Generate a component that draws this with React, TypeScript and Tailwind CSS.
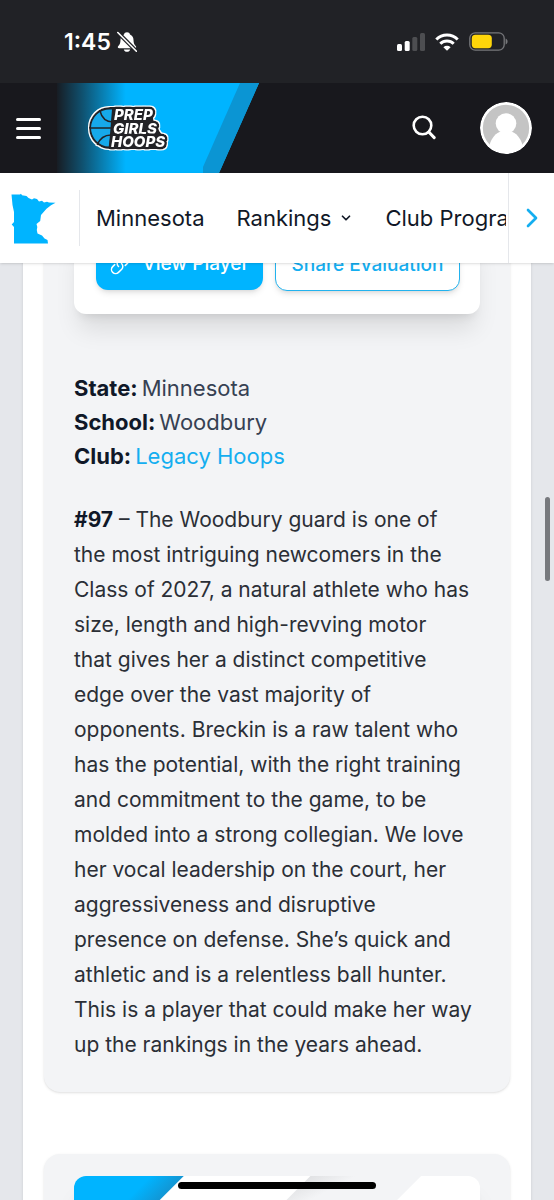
import { ChevronDown, ChevronRight } from "lucide-react";

const facts = [
  { label: "State:", value: "Minnesota" },
  { label: "School:", value: "Woodbury" },
  { label: "Club:", value: "Legacy Hoops", href: "#club" },
];

function StatusBar() {
  return (
    <div className="flex h-[83px] shrink-0 items-center justify-between bg-[#212226] pl-16 pr-[46px] text-white">
      <div className="flex items-center gap-1.5">
        <span className="text-[23px] font-semibold leading-7">1:45</span>
        <svg viewBox="0 0 20 22" className="h-[22px] w-5" fill="currentColor" aria-hidden="true">
          <path d="M10 1.2c-1.6 0-2.7.9-3 2.2-2.4 1-3.5 3.100-3.500 5.600 0 3.200-.9 4.500-2.200 6-.9 1.100-.6 2.300.9 2.300h15.600c1.500 0 1.800-1.200.9-2.300-1.300-1.500-2.200-2.800-2.200-6 0-2.500-1.100-4.600-3.500-5.600-.3-1.300-1.400-2.200-3-2.200Z" />
          <path d="M6.800 18.400h6.400c-.4 1.500-1.600 2.400-3.200 2.400s-2.800-.9-3.200-2.400Z" />
          <path d="m.8 1.500 18.600 18.700" stroke="#212226" strokeWidth="4" />
          <path d="m.8 1.500 18.600 18.700" stroke="currentColor" strokeWidth="1.600" strokeLinecap="round" />
        </svg>
      </div>
      <div className="flex items-center gap-[10px]">
        <svg viewBox="0 0 28 18" className="h-[18px] w-7" fill="currentColor" aria-hidden="true">
          <rect x="0" y="11" width="5" height="7" rx="1.500" />
          <rect x="7.700" y="8" width="5" height="10" rx="1.500" />
          <rect x="15.300" y="4" width="5" height="14" rx="1.500" opacity=".2" />
          <rect x="23" y="0" width="5" height="18" rx="1.500" opacity=".2" />
        </svg>
        <svg viewBox="0 0 24 18" className="h-[18px] w-6" fill="none" stroke="currentColor" strokeWidth="3" aria-hidden="true">
          <path d="M1.300 6.500a15.200 15.200 0 0 1 21.400 0" />
          <path d="M5.300 10.800a9.500 9.500 0 0 1 13.400 0" />
          <path d="M12 17.800 8.400 14.200a5.100 5.100 0 0 1 7.200 0Z" fill="currentColor" stroke="none" />
        </svg>
        <svg viewBox="0 0 39 19" className="h-[19px] w-[39px]" aria-hidden="true">
          <rect x=".8" y=".8" width="34.400" height="17.400" rx="5.500" fill="none" stroke="#77787b" strokeWidth="1.300" />
          <rect x="2.800" y="2.800" width="20" height="13.400" rx="3.600" fill="#ffd60a" />
          <path d="M36.600 6.500c2.600.9 2.600 5.100 0 6Z" fill="#77787b" />
        </svg>
      </div>
    </div>
  );
}

const logoLines = [
  { text: "PREP", x: 57, y: 36.5 },
  { text: "GIRLS", x: 56, y: 50.5 },
  { text: "HOOPS", x: 54, y: 64 },
];

function Logo() {
  return (
    <svg viewBox="0 0 202 90" className="h-[90px] w-[202px]" role="img" aria-label="Prep Girls Hoops">
      <defs>
        <linearGradient id="brand-fade">
          <stop offset="0" stopColor="#00b4ff" stopOpacity=".03" />
          <stop offset=".12" stopColor="#00b4ff" stopOpacity=".35" />
          <stop offset=".24" stopColor="#00b4ff" stopOpacity=".7" />
          <stop offset=".34" stopColor="#00b4ff" />
        </linearGradient>
        <filter id="badge-outline" x="-10%" y="-10%" width="120%" height="120%">
          <feMorphology in="SourceAlpha" operator="dilate" radius="1" />
          <feComponentTransfer result="edge">
            <feFuncR type="linear" slope="0" intercept="1" />
            <feFuncG type="linear" slope="0" intercept="1" />
            <feFuncB type="linear" slope="0" intercept="1" />
          </feComponentTransfer>
          <feMerge>
            <feMergeNode in="edge" />
            <feMergeNode in="SourceGraphic" />
          </feMerge>
        </filter>
      </defs>
      <path d="M0 0h202l-40 90H0Z" fill="url(#brand-fade)" />
      <path d="M183 0h19l-40 90h-16v-6Z" fill="#0b95d3" />
      <g filter="url(#badge-outline)">
        <path d="M94 24H53a21 21 0 0 0 0 42h50l2-14-8-12Z" fill="#222327" />
        <path d="M55 26.500h-2a18.500 18.500 0 0 0-1 37Z" fill="#19a9ea" />
        <path
          d="M34 45h21M43 28c2 8 6 11 13 11M40 62c3-7 7-10 14-10"
          fill="none"
          stroke="#222327"
          strokeWidth="1.500"
        />
        <g
          fontFamily="Inter, sans-serif"
          fontSize="15"
          fontWeight="800"
          fontStyle="italic"
          fill="#fff"
          stroke="#222327"
          strokeWidth="5"
          strokeLinejoin="round"
          paintOrder="stroke"
        >
          {logoLines.map((line) => (
            <text key={line.text} x={line.x} y={line.y}>
              {line.text}
            </text>
          ))}
        </g>
      </g>
    </svg>
  );
}

function SiteHeader() {
  return (
    <header className="flex h-[90px] shrink-0 items-center bg-[#18181d] pr-[22px]">
      <button type="button" aria-label="Open menu" className="flex w-[57px] flex-col gap-1.5 pl-4">
        <span className="h-[3px] w-[25px] rounded-full bg-white" />
        <span className="h-[3px] w-[25px] rounded-full bg-white" />
        <span className="h-[3px] w-[25px] rounded-full bg-white" />
      </button>
      <a href="#home">
        <Logo />
      </a>
      <button type="button" aria-label="Search" className="ml-auto mr-11 text-white">
        <svg viewBox="0 0 24 26" className="h-[26px] w-6" fill="none" stroke="currentColor" strokeWidth="2.600" strokeLinecap="round" aria-hidden="true">
          <circle cx="10.500" cy="10.500" r="8.800" />
          <path d="m16.800 17 5.400 5.600" strokeWidth="3" />
        </svg>
      </button>
      <button type="button" aria-label="Account" className="size-[52px] overflow-hidden rounded-full">
        <svg viewBox="0 0 52 52" aria-hidden="true">
          <circle cx="26" cy="26" r="26" fill="#fff" />
          <circle cx="26" cy="26" r="23.200" fill="#c4c4c4" />
          <circle cx="26" cy="21.500" r="10.300" fill="#fff" />
          <path d="M9.500 43c2-7 6.500-12.500 12-13.500h9c5.500 1 10 6.500 12 13.500-4 5-10 8-16.500 8S13.500 48 9.500 43Z" fill="#fff" />
        </svg>
      </button>
    </header>
  );
}

function StateNav() {
  return (
    <nav className="relative z-10 flex h-[90px] shrink-0 items-center bg-white text-[22px] text-[#111827] shadow-sm">
      <a href="#state" aria-label="Minnesota home" className="shrink-0 pl-[11px]">
        <svg viewBox="0 0 45 51" className="h-[51px] w-[45px]" fill="#00b4ff" aria-hidden="true">
          <path d="M.5 1.500H9L10 .8l1 1.500 4.500.8 2 2 3.500 1.400L23 5.300l3 .7 2 2.500 3-.7 2 1.700 3-.8 2 .8 6.500.2-4.500 2.500-4.500 3.500L30 22l-.8 6-3.700 3 .8 3-.5 3 .7 3.500 4.500 2 2.500 3 3 1.500.5 3.500H3V34l-2.300-2.500L3 29V19L1.500 12Z" />
        </svg>
      </a>
      <div className="ml-[23px] h-14 w-px shrink-0 bg-gray-200" />
      <div className="mr-0.5 flex min-w-0 flex-1 items-center gap-8 overflow-hidden whitespace-nowrap pl-4">
        <a href="#minnesota">Minnesota</a>
        <button type="button" className="flex items-center gap-2">
          Rankings
          <ChevronDown className="size-[14px]" strokeWidth={3} />
        </button>
        <a href="#club-programs">Club Programs</a>
      </div>
      <button
        type="button"
        aria-label="Scroll menu right"
        className="flex h-full w-[46px] shrink-0 items-center justify-center border-l border-gray-200 text-[#14aef0]"
      >
        <ChevronRight className="size-8" strokeWidth={2} />
      </button>
    </nav>
  );
}

function EvaluationCard() {
  return (
    <section className="rounded-b-2xl bg-gray-100 px-[30px] pb-[30px] shadow">
      <div className="grid grid-cols-[167fr_185fr] gap-3 rounded-b-xl bg-white pb-[23px] pl-[22px] pr-5 pt-2 text-[19px] font-medium shadow-xl">
        <a
          href="#player"
          className="flex h-[51px] items-center justify-center gap-3 whitespace-nowrap rounded-xl bg-[#00b4ff] text-white shadow-md"
        >
          <svg viewBox="0 0 20 20" className="size-5" fill="none" stroke="currentColor" strokeWidth="1.500" strokeLinecap="round" aria-hidden="true">
            <path d="M8.500 11.500a4 4 0 0 1-.2-5.700l3.200-3.200a4 4 0 0 1 5.800 5.800l-2 2" />
            <path d="M11.500 8.500a4 4 0 0 1 .2 5.700l-3.200 3.200a4 4 0 0 1-5.800-5.800l2-2" />
          </svg>
          View Player
        </a>
        <button
          type="button"
          className="h-[52px] whitespace-nowrap rounded-xl border border-[#22b2ee] bg-white text-[#14aef0] shadow-md"
        >
          Share Evaluation
        </button>
      </div>

      <dl className="mt-[57px] text-[22px] leading-[34px] text-gray-700">
        {facts.map((fact) => (
          <div key={fact.label} className="flex gap-1">
            <dt className="font-bold text-gray-900">{fact.label}</dt>
            <dd>
              {fact.href ? (
                <a href={fact.href} className="text-[#14aef0]">
                  {fact.value}
                </a>
              ) : (
                fact.value
              )}
            </dd>
          </div>
        ))}
      </dl>

      <p className="mt-[29px] pr-2 text-[21px] leading-[35px] text-[#2b2f36]">
        <strong className="font-bold text-gray-900">#97</strong> – The Woodbury guard is one of
        <br />
        the most intriguing newcomers in the Class of 2027, a natural athlete who has size, length and
        high-revving motor
        <br />
        that gives her a distinct competitive
        <br />
        edge over the vast majority of
        <br />
        opponents. Breckin is a raw talent who
        <br />
        has the potential, with the right training and commitment to the game, to be
        <br />
        molded into a strong collegian. We love
        <br />
        her vocal leadership on the court, her
        <br />
        aggressiveness and disruptive
        <br />
        presence on defense. She’s quick and
        <br />
        athletic and is a relentless ball hunter.
        <br />
        This is a player that could make her way up the rankings in the years ahead.
      </p>
    </section>
  );
}

function NextCard() {
  return (
    <section className="rounded-t-2xl bg-gray-100 px-[30px] pt-[22px] shadow">
      <div className="overflow-hidden rounded-t-xl bg-white shadow-xl">
        <svg viewBox="0 0 407 120" className="w-full" aria-hidden="true">
          <defs>
            <linearGradient id="band-blue" x1="0" y1="0" x2="1" y2="1">
              <stop offset=".35" stopColor="#00b4ff" />
              <stop offset=".5" stopColor="#1296d4" />
            </linearGradient>
            <linearGradient id="band-gray" x1="0" y1="0" x2="1" y2="1">
              <stop offset=".25" stopColor="#dfe0e2" />
              <stop offset=".36" stopColor="#f3f4f6" />
            </linearGradient>
          </defs>
          <path d="M0 0h110L0 110Z" fill="url(#band-blue)" />
          <path d="M237 0h111L228 120H117Z" fill="url(#band-gray)" />
        </svg>
      </div>
    </section>
  );
}

export default function App() {
  return (
    <div className="relative flex h-screen flex-col overflow-hidden bg-[#e5e7eb] font-['Inter',sans-serif]">
      <StatusBar />
      <SiteHeader />
      <StateNav />
      <main className="min-h-0 flex-1 overflow-hidden px-[23px]">
        {/* page is scrolled, so the top of the column sits under the nav */}
        <div className="-mt-8 flex flex-col gap-[62px] bg-white px-[21px] shadow">
          <EvaluationCard />
          <NextCard />
        </div>
      </main>
      <div className="absolute right-1 top-[497px] h-[84px] w-[5px] rounded-full bg-[#77797d]" />
      <div className="absolute bottom-[11px] left-1/2 z-20 h-[7px] w-[198px] -translate-x-1/2 rounded-full bg-black" />
    </div>
  );
}
